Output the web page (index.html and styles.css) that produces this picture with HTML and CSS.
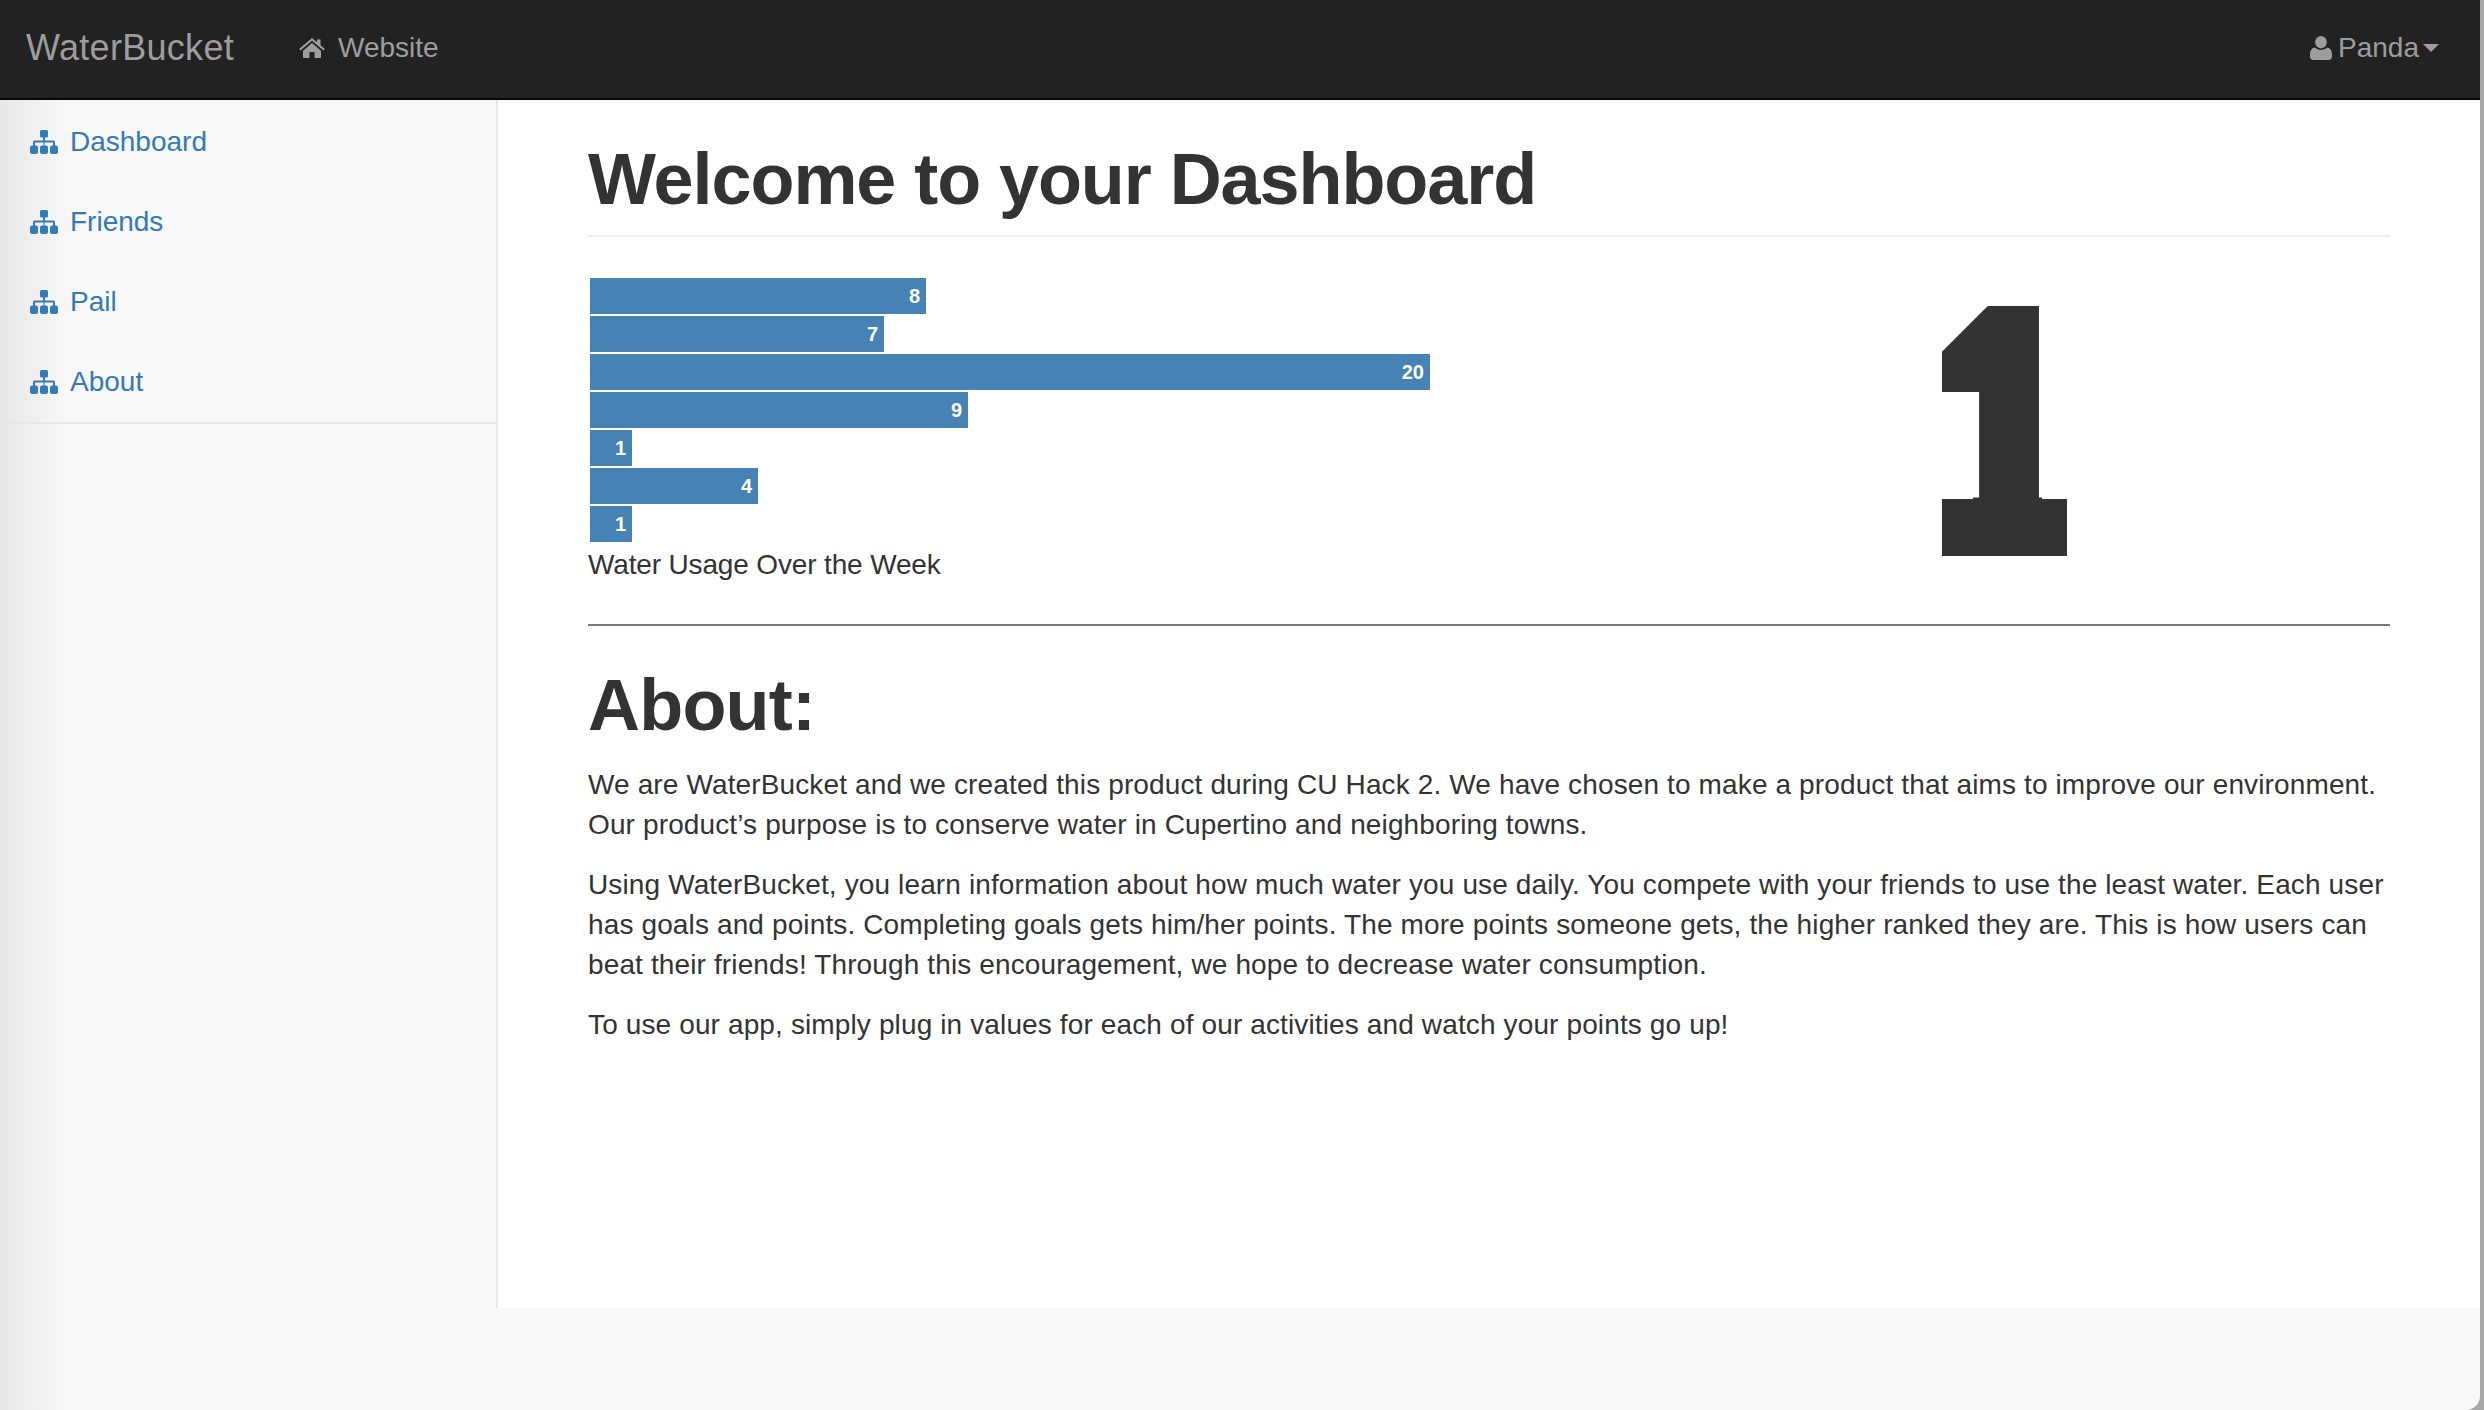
FILE: index.html
```html
<!DOCTYPE html>
<html lang="en">
<head>
<meta charset="utf-8">
<title>WaterBucket</title>
<link rel="stylesheet" href="styles.css">
</head>
<body>
<svg class="defs" width="0" height="0" aria-hidden="true">
  <symbol id="sitemap" viewBox="0 0 28 24">
    <rect x="10" y="0" width="8" height="7.500" rx="1.500"/>
    <path d="M13 7h2v3.500h8.500a1.500 1.500 0 0 1 1.500 1.500v4h-2v-3.500h-8.500V16h-1v-3.500H5V16H3v-4a1.500 1.500 0 0 1 1.500-1.500H13z"/>
    <rect x="0" y="15.500" width="8" height="8.500" rx="2"/>
    <rect x="10" y="15.500" width="8" height="8.500" rx="2"/>
    <rect x="20" y="15.500" width="8" height="8.500" rx="2"/>
  </symbol>
</svg>
<header class="navbar">
  <div class="nav-left">
    <a class="brand">WaterBucket</a>
    <a class="nav-link">
      <svg class="icon-home" viewBox="0 0 26 20"><path d="M13 0l5 4.300V1.500h3.500v5.800L26 11l-1.400 1.600L13 2.700 1.400 12.600 0 11zM4 12.700L13 5l9 7.700V20h-6.500v-6h-5v6H4z"/></svg>
      <span>Website</span>
    </a>
  </div>
  <a class="nav-user">
    <svg class="icon-user" viewBox="0 0 22 24"><ellipse cx="11" cy="6.200" rx="5.800" ry="6.200"/><path d="M5 11.500c1.500 1.500 3.500 2.300 6 2.300s4.500-.8 6-2.300c3 .3 5 2.500 5 7.500v1.500c0 2-1.400 3.500-3.400 3.500H3.400C1.400 24 0 22.500 0 20.500V19c0-5 2-7.200 5-7.500z"/></svg>
    <span>Panda</span><i class="caret"></i>
  </a>
</header>
<div class="window">
  <div class="main">
    <nav class="sidebar">
      <ul class="menu">
        <li><a><svg class="icon-map"><use href="#sitemap"/></svg>Dashboard</a></li>
        <li><a><svg class="icon-map"><use href="#sitemap"/></svg>Friends</a></li>
        <li><a><svg class="icon-map"><use href="#sitemap"/></svg>Pail</a></li>
        <li><a><svg class="icon-map"><use href="#sitemap"/></svg>About</a></li>
      </ul>
    </nav>
    <main class="content">
      <h1 class="title">Welcome to your Dashboard</h1>
      <section class="stats">
        <div class="chart-col">
          <div class="chart">
            <div class="bar" style="width:336px">8</div>
            <div class="bar" style="width:294px">7</div>
            <div class="bar" style="width:840px">20</div>
            <div class="bar" style="width:378px">9</div>
            <div class="bar" style="width:42px">1</div>
            <div class="bar" style="width:168px">4</div>
            <div class="bar" style="width:42px">1</div>
          </div>
          <p class="caption">Water Usage Over the Week</p>
        </div>
        <div class="rank"><span class="rank-num">1</span></div>
      </section>
      <hr class="rule">
      <h1 class="about">About:</h1>
      <p>We are WaterBucket and we created this product during CU Hack 2. We have chosen to make a product that aims to improve our environment. Our product’s purpose is to conserve water in Cupertino and neighboring towns.</p>
      <p>Using WaterBucket, you learn information about how much water you use daily. You compete with your friends to use the least water. Each user has goals and points. Completing goals gets him/her points. The more points someone gets, the higher ranked they are. This is how users can beat their friends! Through this encouragement, we hope to decrease water consumption.</p>
      <p>To use our app, simply plug in values for each of our activities and watch your points go up!</p>
    </main>
  </div>
</div>
</body>
</html>
```
FILE: styles.css
```css
* { box-sizing: border-box; }
html, body { margin: 0; padding: 0; }
body {
  width: 2484px;
  height: 1410px;
  overflow: hidden;
  background: #a9a9a9;
  font-family: "Liberation Sans", Arial, sans-serif;
  font-size: 28px;
  line-height: 40px;
  color: #333;
}
.defs { position: absolute; }
.navbar {
  width: 2480px;
  height: 100px;
  background: #222;
  border-bottom: 2px solid #080808;
  display: flex;
  align-items: center;
  justify-content: space-between;
  padding: 0 41px 3px 26px;
  color: #9d9d9d;
}
.nav-left { display: flex; align-items: center; gap: 65px; }
.brand { font-size: 36px; line-height: 40px; color: #9d9d9d; letter-spacing: .3px; }
.nav-link { display: flex; align-items: center; gap: 13px; }
.icon-home { width: 26px; height: 20px; fill: #9d9d9d; }
.nav-user { display: flex; align-items: center; }
.icon-user { width: 22px; height: 24px; fill: #9d9d9d; margin-right: 6px; }
.caret {
  width: 0; height: 0;
  margin-left: 4px;
  border-left: 8px solid transparent;
  border-right: 8px solid transparent;
  border-top: 8px solid #9d9d9d;
}
.window {
  width: 2480px;
  height: 1310px;
  background: linear-gradient(to right, #e7e7e7, #f8f8f8 70px);
  border-bottom-right-radius: 14px;
  overflow: hidden;
}
.main { display: flex; height: 1208px; }
.sidebar {
  width: 498px;
  border-right: 2px solid #e7e7e7;
  background: linear-gradient(to right, #e7e7e7, #f8f8f8 70px);
}
.menu { list-style: none; margin: 0; padding: 2px 0 0; border-bottom: 2px solid #e7e7e7; }
.menu li a {
  display: flex;
  align-items: center;
  height: 80px;
  padding-left: 30px;
  color: #337ab7;
}
.icon-map { width: 28px; height: 24px; fill: #337ab7; margin-right: 12px; flex: none; }
.content {
  flex: 1;
  background: #fff;
  padding: 0 90px;
}
.content p { margin: 0 0 20px; color: #333; letter-spacing: .13px; }
.title {
  margin: 36px 0 0;
  padding: 3px 0 17px;
  font-size: 72px;
  line-height: 80px;
  font-weight: 700;
  letter-spacing: -1.07px;
  border-bottom: 2px solid #eee;
  height: 101px;
}
.stats { display: flex; justify-content: space-between; margin-top: 41px; height: 346px; }
.chart-col { width: 1000px; }
.chart { display: flex; flex-direction: column; gap: 2px; padding-left: 2px; }
.bar {
  height: 36px;
  background: steelblue;
  color: #fff;
  font-size: 20px;
  font-weight: 700;
  line-height: 37px;
  text-align: right;
  padding-right: 6px;
}
.content .caption { margin: 3px 0 0; line-height: 40px; letter-spacing: -.15px; }
.rank {
  position: relative;
  width: 774px;
  display: flex;
  justify-content: center;
  clip-path: polygon(372px 28px, 426px 28px, 426px 221px, 451px 221px, 451px 278px, 326px 278px, 326px 221px, 357px 221px, 357px 114px, 326px 114px, 326px 74px);
}
.rank::before,
.rank::after {
  content: "";
  position: absolute;
  left: 326px;
  background: #333;
}
.rank::before { top: 28px; width: 58px; height: 86px; }
.rank::after { top: 221px; width: 125px; height: 57px; }
.rank-num {
  font-family: "DejaVu Sans", sans-serif;
  font-weight: 700;
  font-size: 320px;
  line-height: 320px;
  height: 320px;
  margin-top: 2px;
  color: #333;
  -webkit-text-stroke: 24px #333;
  transform: scaleX(.74);
}
.rule { margin: 0; border: 0; border-top: 2px solid #777; }
.about {
  margin: 39px 0 20px;
  font-size: 72px;
  line-height: 80px;
  font-weight: 700;
  letter-spacing: -.8px;
}
```
